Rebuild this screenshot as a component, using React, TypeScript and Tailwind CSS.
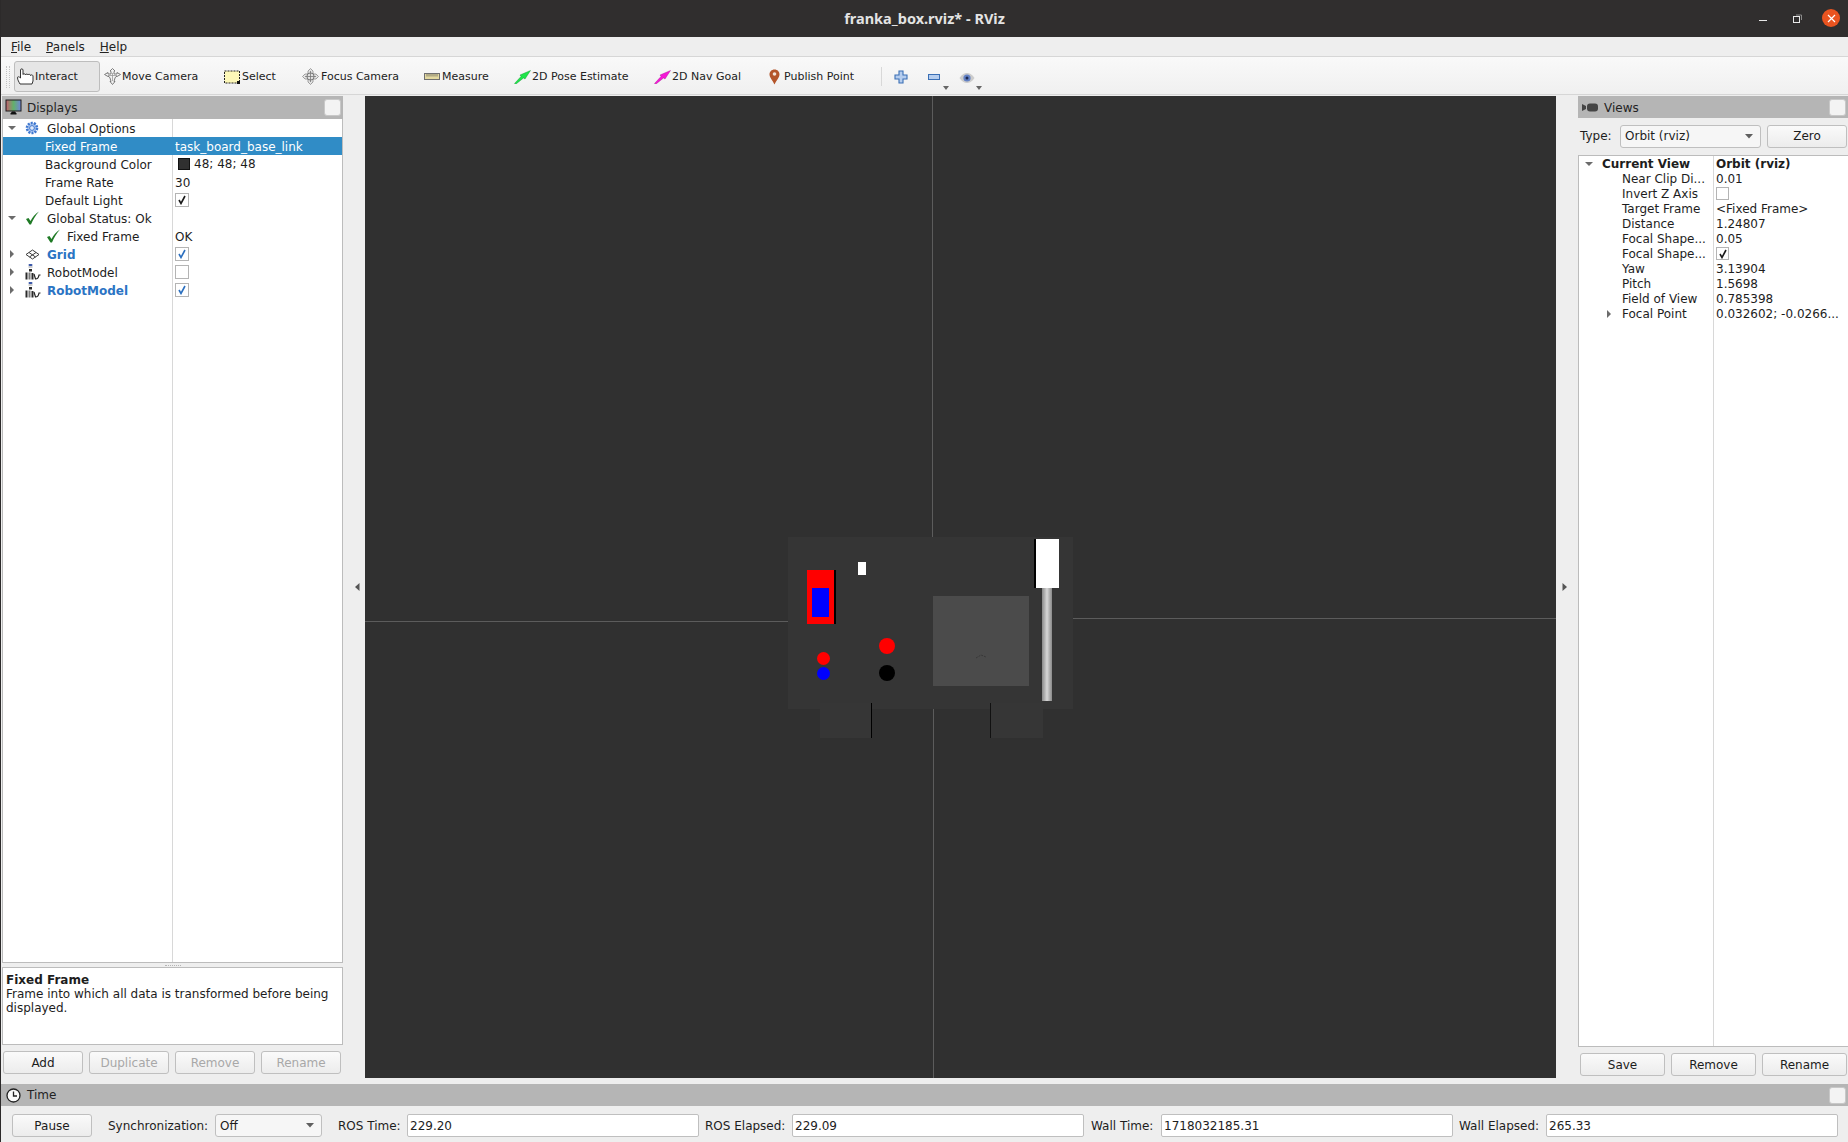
import type { ReactNode } from "react";

const UI = "font-['DejaVu_Sans',sans-serif]";

function Arrow({ open }: { open?: boolean }) {
  return (
    <svg width="10" height="10" viewBox="0 0 10 10" className="shrink-0">
      {open ? <path d="M1 3 L9 3 L5 7 Z" fill="#6b6b6b" /> : <path d="M3 1 L7 5 L3 9 Z" fill="#6b6b6b" />}
    </svg>
  );
}

function Check({ on, blue, size = 14 }: { on?: boolean; blue?: boolean; size?: number }) {
  return (
    <span className="flex shrink-0 items-center justify-center border border-[#b4b4b4] bg-white" style={{ width: size, height: size }}>
      {on && (
        <svg width="10" height="10" viewBox="0 0 10 10">
          <path d="M2 5 L4 8.5 L8 1" fill="none" stroke={blue ? "#2b6fbf" : "#1a1a1a"} strokeWidth="1.6" />
        </svg>
      )}
    </span>
  );
}

function GreenTick() {
  return (
    <svg width="15" height="14" viewBox="0 0 15 14" className="shrink-0">
      <path d="M1 8 L3.5 7 L5.5 10 C7.5 6 10 3 14 0.5 C10.5 4.5 8 8.5 6 13.5 L4.5 13.5 Z" fill="#1f7a25" />
    </svg>
  );
}

function Gear() {
  return (
    <svg width="14" height="14" viewBox="0 0 14 14" className="shrink-0">
      <circle cx="7" cy="7" r="5" fill="#b4cbf0" stroke="#3f78d0" strokeWidth="2.6" strokeDasharray="2 1.1" />
      <circle cx="7" cy="7" r="2.4" fill="#dfe8f8" stroke="#3f78d0" />
    </svg>
  );
}

function GridIcon() {
  return (
    <svg width="15" height="11" viewBox="0 0 15 11" className="shrink-0">
      <path d="M7.5 1 L14 5.5 L7.5 10 L1 5.5 Z M4 3.5 L10.5 8 M11 3.5 L4.5 8" fill="none" stroke="#3c3c3c" />
    </svg>
  );
}

function RobotIcon() {
  return (
    <svg width="16" height="16" viewBox="0 0 16 16" className="shrink-0">
      <rect x="3.5" y="0" width="4" height="2" rx="1" fill="#3a57a8" />
      <rect x="3.5" y="2.5" width="4" height="1" fill="#9a9a9a" />
      <rect x="4" y="5" width="3" height="2.5" fill="#2a2a2a" />
      <rect x="0.5" y="8.5" width="2" height="7" fill="#2a2a2a" />
      <rect x="3.5" y="8.5" width="2" height="7" fill="#777" />
      <rect x="6.5" y="9" width="2" height="6.5" fill="#2a2a2a" />
      <path d="M9 10 L10.5 15 C12.5 15 13.5 14 14 11 L15.5 11" fill="none" stroke="#222" strokeWidth="1.2" />
    </svg>
  );
}

function Row({ icon, arrow, indent, label, bold, selected, children }: { icon?: ReactNode; arrow?: "open" | "closed"; indent?: boolean; label: string; bold?: boolean; selected?: boolean; children?: ReactNode }) {
  return (
    <div className={`flex h-[18px] items-center ${selected ? "bg-[#308cc6] text-white" : ""}`}>
      <div className={`flex h-full w-[170px] shrink-0 items-center border-r ${selected ? "border-[#308cc6]" : "border-[#d8d8d8]"}`}>
        <div className="flex w-[22px] shrink-0 justify-start pl-[4px]">{arrow && <Arrow open={arrow === "open"} />}</div>
        {indent && <span className="w-[20px] shrink-0" />}
        {icon ? <div className="flex w-[22px] shrink-0 items-center justify-start">{icon}</div> : null}
        <span className={`pt-[1px] ${bold ? "font-bold text-[#2b74c4]" : ""}`}>{label}</span>
      </div>
      <div className="flex h-full min-w-0 flex-1 items-center pl-[2px]">{children}</div>
    </div>
  );
}

function SmallRow({ arrow, label, bold, value }: { arrow?: "open" | "closed"; label: string; bold?: boolean; value: ReactNode }) {
  return (
    <div className={`flex h-[15px] items-center ${bold ? "font-bold" : ""}`}>
      <div className="flex h-full w-[135px] shrink-0 items-center border-r border-[#d8d8d8]">
        {arrow === "open" && <span className="ml-[5px] flex w-[38px]"><Arrow open /></span>}
        {arrow === "closed" && <span className="ml-[25px] flex w-[18px]"><Arrow /></span>}
        {!arrow && <span className="w-[43px]" />}
        <span className={`whitespace-nowrap ${bold ? "-ml-[20px]" : ""}`}>{label}</span>
      </div>
      <div className="flex h-full min-w-0 flex-1 items-center whitespace-nowrap pl-[2px]">{value}</div>
    </div>
  );
}

function QButton({ children, disabled, className }: { children: ReactNode; disabled?: boolean; className: string }) {
  return (
    <button className={`flex items-center justify-center rounded-[3px] border border-[#bfbfbf] bg-gradient-to-b from-[#fafafa] to-[#ececec] text-[12px] ${disabled ? "text-[#a8a8a8]" : "text-[#1c1c1c]"} ${className}`}>
      {children}
    </button>
  );
}

function DockHeader({ icon, title, className }: { icon: ReactNode; title: string; className: string }) {
  return (
    <div className={`flex shrink-0 items-center bg-[#b5b5b5] pr-[2px] text-[12px] text-[#232323] ${className}`}>
      {icon}
      <span className="flex-1">{title}</span>
      <span className="h-[17px] w-[17px] rounded-[3px] border border-[#c8c8c8] bg-[#f3f3f3]" />
    </div>
  );
}

function Combo({ text, className }: { text: string; className: string }) {
  return (
    <div className={`flex items-center justify-between rounded-[3px] border border-[#bfbfbf] bg-[#f6f6f6] pl-[4px] pr-[7px] text-[12px] ${className}`}>
      <span>{text}</span>
      <svg width="8" height="5" viewBox="0 0 8 5"><path d="M0 0 H8 L4 4.5 Z" fill="#5f5f5f" /></svg>
    </div>
  );
}

function TimeField({ label, value, labelClass, className }: { label: string; value: string; labelClass: string; className: string }) {
  return (
    <>
      <span className={`shrink-0 whitespace-nowrap ${labelClass}`}>{label}</span>
      <div className={`flex h-[23px] w-[292px] shrink-0 items-center rounded-[2px] border border-[#bfbfbf] bg-white pl-[2px] ${className}`}>{value}</div>
    </>
  );
}

const tools: { label: string; w: string; box: string; icon: ReactNode }[] = [
  {
    label: "Move Camera",
    w: "w-[120px]",
    box: "w-[18px]",
    icon: (
      <svg width="17" height="17" viewBox="0 0 17 17">
        <path d="M8.5 0.5 L11 3 L10 3.5 V6 L13 6 L13 4.5 L16.5 6.5 L13 8.5 L12 8.5 L11 10 L10 13.5 L11 13.5 L8.5 16.5 L6 13.5 L7 13.5 L6 10 L5 8.5 L4 8.5 L0.5 6.5 L4 4.5 L4 6 L7 6 V3.5 L6 3 Z" fill="#f2f2f2" stroke="#6f6f6f" strokeWidth="0.9" />
        <path d="M4 7.5 H13 M8.5 5 V13" stroke="#999" strokeWidth="0.8" />
      </svg>
    ),
  },
  {
    label: "Select",
    w: "w-[78px]",
    box: "w-[18px]",
    icon: (
      <svg width="16" height="14" viewBox="0 0 16 14">
        <rect x="0.5" y="1" width="15" height="12" fill="#fdf8b8" stroke="#222" strokeDasharray="2 1" />
        <rect x="13" y="11" width="3" height="3" fill="#111" />
      </svg>
    ),
  },
  {
    label: "Focus Camera",
    w: "w-[122px]",
    box: "w-[19px]",
    icon: (
      <svg width="17" height="17" viewBox="0 0 17 17">
        <path d="M8.5 0.5 L11 3 V6 H14 L16.5 8.5 L14 11 H11 V14 L8.5 16.5 L6 14 V11 H3 L0.5 8.5 L3 6 H6 V3 Z" fill="#e2e2e2" stroke="#8a8a8a" strokeWidth="0.8" />
        <circle cx="8.5" cy="8.5" r="3.6" fill="none" stroke="#777" />
        <path d="M8.5 3 V14 M3 8.5 H14" stroke="#777" strokeWidth="0.8" />
      </svg>
    ),
  },
  {
    label: "Measure",
    w: "w-[90px]",
    box: "w-[18px]",
    icon: (
      <svg width="16" height="8" viewBox="0 0 16 8">
        <rect x="0.5" y="0.5" width="15" height="6" fill="#e3d9a0" stroke="#6f6f6f" />
        <path d="M3 1 V3.5 M5 1 V3.5 M7 1 V3.5 M9 1 V3.5 M11 1 V3.5 M13 1 V3.5" stroke="#555" strokeWidth="0.7" />
      </svg>
    ),
  },
  {
    label: "2D Pose Estimate",
    w: "w-[140px]",
    box: "w-[18px]",
    icon: (
      <svg width="17" height="14" viewBox="0 0 17 14">
        <path d="M0.5 13.5 L7 6.5 L6 5 L16.5 0.5 L11 9 L9.5 8 L2 14 Z" fill="#1ee64a" stroke="#0c8a28" strokeWidth="0.4" />
      </svg>
    ),
  },
  {
    label: "2D Nav Goal",
    w: "w-[115px]",
    box: "w-[18px]",
    icon: (
      <svg width="17" height="14" viewBox="0 0 17 14">
        <path d="M0.5 13.5 L7 6.5 L6 5 L16.5 0.5 L11 9 L9.5 8 L2 14 Z" fill="#f517d6" stroke="#a5108f" strokeWidth="0.4" />
      </svg>
    ),
  },
  {
    label: "Publish Point",
    w: "w-[112px]",
    box: "w-[15px]",
    icon: (
      <svg width="11" height="16" viewBox="0 0 11 16">
        <path d="M5.5 0.5 C8.5 0.5 10.5 2.7 10.5 5.5 C10.5 8.5 7.5 11 5.5 15.5 C3.5 11 0.5 8.5 0.5 5.5 C0.5 2.7 2.5 0.5 5.5 0.5 Z" fill="#b4552a" />
        <circle cx="5.5" cy="5" r="1.8" fill="#f2e3d8" />
      </svg>
    ),
  },
];

function TitleBar() {
  return (
    <div className="relative flex h-[37px] shrink-0 items-center justify-center bg-[#302e2e] font-['Noto_Sans',sans-serif] text-[14.5px] font-bold text-[#e3e3e3]">
      franka_box.rviz* - RViz
      <div className="absolute right-[8px] top-[9px] flex items-center">
        <span className="mr-[26px] mt-[4px] h-[1px] w-[8px] bg-[#e8e8e8]" />
        <svg width="9" height="9" viewBox="0 0 9 9" className="mr-[20px]">
          <rect x="0.5" y="2.5" width="6" height="6" fill="none" stroke="#e8e8e8" />
          <path d="M3 1 H8.5 V6" fill="none" stroke="#8a8a8a" />
        </svg>
        <span className="flex h-[18px] w-[18px] items-center justify-center rounded-full bg-[#e95420]">
          <svg width="9" height="9" viewBox="0 0 9 9"><path d="M1 1 L8 8 M8 1 L1 8" stroke="#fff" strokeWidth="1.2" /></svg>
        </span>
      </div>
    </div>
  );
}

function Toolbar() {
  return (
    <div className="flex h-[39px] shrink-0 items-center border-y border-[#d6d6d6] bg-gradient-to-b from-[#f9f9f9] to-[#f0f0f0] pt-[2px] text-[11px] text-[#222]">
      <span className="ml-[5px] mr-[4px] h-[22px] w-[4px] border-x border-dotted border-[#c4c4c4]" />
      <div className="mr-[4px] flex h-[31px] w-[86px] items-center rounded-[3px] border border-[#bdbdbd] bg-[#e6e6e6] pl-[2px]">
        <svg width="17" height="17" viewBox="0 0 17 17">
          <path d="M3 16 C2 14 0.5 12 0.5 9.5 C0.5 8.5 2 8.5 3.5 10 V2 C3.5 0.5 6 0.5 6 2 V6.5 C6 5.5 8.5 5.5 8.5 7 C8.5 5.8 11 5.8 11 7 C11 6 13.5 6 13.5 7.5 C13.5 6.5 16 6.8 16 8 V13 L15 16 Z" fill="#fff" stroke="#1e1e1e" strokeWidth="0.9" />
        </svg>
        <span className="ml-[1px] pt-[2px]">Interact</span>
      </div>
      {tools.map((t) => (
        <div key={t.label} className={`flex shrink-0 items-center whitespace-nowrap ${t.w}`}>
          <span className={`flex shrink-0 items-center ${t.box}`}>{t.icon}</span>
          <span className="pt-[2px]">{t.label}</span>
        </div>
      ))}
      <span className="h-[19px] w-[1px] bg-[#d8d8d8]" />
      <svg width="14" height="14" viewBox="0 0 14 14" className="ml-[12px]">
        <path d="M5 1 H9 V5 H13 V9 H9 V13 H5 V9 H1 V5 H5 Z" fill="#b5cdee" stroke="#3a6fb5" strokeWidth="1.1" />
      </svg>
      <div className="relative ml-[20px] h-[20px] w-[13px]">
        <span className="absolute left-0 top-[7px] h-[6px] w-[12px] border border-[#3a6fb5] bg-[#b5cdee]" />
        <svg width="6" height="4" viewBox="0 0 6 4" className="absolute left-[15px] top-[19px]"><path d="M0 0 H6 L3 4 Z" fill="#666" /></svg>
      </div>
      <div className="relative ml-[18px] h-[20px] w-[16px]">
        <svg width="16" height="12" viewBox="0 0 16 12" className="absolute left-0 top-[5px]">
          <path d="M0.5 6 C3 2 6 1 8 1 C10 1 13 2 15.5 6 C13 10 10 11 8 11 C6 11 3 10 0.5 6 Z" fill="#cccccc" />
          <circle cx="8" cy="6" r="3.6" fill="#6180c4" />
          <circle cx="8" cy="6" r="1.5" fill="#1a2650" />
        </svg>
        <svg width="6" height="4" viewBox="0 0 6 4" className="absolute left-[17px] top-[19px]"><path d="M0 0 H6 L3 4 Z" fill="#666" /></svg>
      </div>
    </div>
  );
}

function DisplaysPanel() {
  return (
    <div className="flex h-full w-[341px] shrink-0 flex-col text-[12px] text-[#1d1d1d]">
      <DockHeader
        className="h-[23px] pl-[3px]"
        title="Displays"
        icon={
          <svg width="17" height="17" viewBox="0 0 17 17" className="mr-[5px]">
            <defs>
              <linearGradient id="screen" x1="0" x2="1" y1="0" y2="0">
                <stop offset="0%" stopColor="#c4606e" />
                <stop offset="50%" stopColor="#63b06b" />
                <stop offset="100%" stopColor="#7184d8" />
              </linearGradient>
            </defs>
            <rect x="1" y="1" width="15" height="11" fill="url(#screen)" stroke="#1d1d1d" />
            <path d="M5.5 15.5 H11.5 V14.5 L10 12.5 H7 L5.5 14.5 Z" fill="#111" />
          </svg>
        }
      />
      <div className="flex min-h-0 flex-1 flex-col border-x border-b border-[#bcbcbc] bg-white">
        <Row arrow="open" icon={<Gear />} label="Global Options" />
        <Row indent label="Fixed Frame" selected><span className="pt-[1px]">task_board_base_link</span></Row>
        <Row indent label="Background Color">
          <span className="ml-[3px] mr-[4px] h-[12px] w-[12px] border border-[#111] bg-[#303030]" />48; 48; 48
        </Row>
        <Row indent label="Frame Rate"><span className="pt-[1px]">30</span></Row>
        <Row indent label="Default Light"><Check on /></Row>
        <Row arrow="open" icon={<GreenTick />} label="Global Status: Ok" />
        <div className="flex h-[18px] items-center">
          <div className="flex h-full w-[170px] shrink-0 items-center border-r border-[#d8d8d8] pl-[43px]">
            <GreenTick />
            <span className="ml-[6px] pt-[1px]">Fixed Frame</span>
          </div>
          <div className="pl-[2px] pt-[1px]">OK</div>
        </div>
        <Row arrow="closed" icon={<GridIcon />} label="Grid" bold><Check on blue /></Row>
        <Row arrow="closed" icon={<RobotIcon />} label="RobotModel"><Check /></Row>
        <Row arrow="closed" icon={<RobotIcon />} label="RobotModel" bold><Check on blue /></Row>
        <div className="ml-[169px] flex-1 border-l border-[#d8d8d8]" />
      </div>
      <div className="flex h-[4px] shrink-0 items-center justify-center">
        <span className="h-[1px] w-[16px] border-t border-dotted border-[#b5b5b5]" />
      </div>
      <div className="h-[78px] shrink-0 border border-[#bcbcbc] bg-white pl-[3px] pr-[5px] pt-[5px] leading-[14px]">
        <div className="font-bold">Fixed Frame</div>
        Frame into which all data is transformed before being displayed.
      </div>
      <div className="flex h-[39px] shrink-0 items-start gap-[6px] pl-[1px] pt-[6px]">
        <QButton className="h-[23px] w-[80px]">Add</QButton>
        <QButton disabled className="h-[23px] w-[80px]">Duplicate</QButton>
        <QButton disabled className="h-[23px] w-[80px]">Remove</QButton>
        <QButton disabled className="h-[23px] w-[80px]">Rename</QButton>
      </div>
    </div>
  );
}

function Viewport() {
  return (
    <div className="relative h-[982px] w-[1191px] shrink-0 overflow-hidden bg-[#303030]">
      {/* grid lines */}
      <div className="absolute left-0 top-[525px] h-[1px] w-[424px] bg-[#5c5c5c]" />
      <div className="absolute left-[707px] top-[522px] h-[1px] w-[484px] bg-[#5c5c5c]" />
      <div className="absolute left-[567px] top-0 h-[442px] w-[1px] bg-[#5c5c5c]" />
      <div className="absolute left-[568px] top-[612px] h-[370px] w-[1px] bg-[#5c5c5c]" />
      {/* board */}
      <div className="absolute left-[423px] top-[441px] h-[172px] w-[285px] bg-[#353535]" />
      <div className="absolute left-[455px] top-[607px] h-[35px] w-[52px] bg-[#363636]" />
      <div className="absolute left-[506px] top-[607px] h-[35px] w-[1px] bg-black" />
      <div className="absolute left-[625px] top-[607px] h-[35px] w-[53px] bg-[#363636]" />
      <div className="absolute left-[625px] top-[607px] h-[35px] w-[1px] bg-[#111]" />
      {/* parts */}
      <div className="absolute left-[442px] top-[474px] h-[54px] w-[27px] bg-[#ff0000]" />
      <div className="absolute left-[469px] top-[474px] h-[54px] w-[2px] bg-black" />
      <div className="absolute left-[447px] top-[492px] h-[29px] w-[17px] bg-[#0000ff]" />
      <div className="absolute left-[493px] top-[466px] h-[13px] w-[8px] bg-white" />
      <div className="absolute left-[568px] top-[500px] h-[90px] w-[96px] bg-[#4b4b4b]" />
      <svg width="12" height="5" viewBox="0 0 12 5" className="absolute left-[610px] top-[558px]">
        <path d="M1 4 L6 1 L11 3" fill="none" stroke="#383838" strokeDasharray="2 1" />
      </svg>
      <div className="absolute left-[669px] top-[443px] h-[49px] w-[2px] bg-black" />
      <div className="absolute left-[671px] top-[443px] h-[49px] w-[23px] bg-white" />
      <div className="absolute left-[677px] top-[492px] h-[113px] w-[10px] bg-gradient-to-r from-[#8a8a8a] via-[#d8d8d8] to-[#8a8a8a]" />
      <div className="absolute left-[452px] top-[556px] h-[13px] w-[13px] rounded-full bg-[#ff0000]" />
      <div className="absolute left-[452px] top-[571px] h-[13px] w-[13px] rounded-full bg-[#0000ff]" />
      <div className="absolute left-[514px] top-[542px] h-[16px] w-[16px] rounded-full bg-[#ff0000]" />
      <div className="absolute left-[514px] top-[569px] h-[16px] w-[16px] rounded-full bg-black" />
    </div>
  );
}

function LeftHandle() {
  return (
    <div className="flex h-full w-[22px] shrink-0 items-center pb-[7px] pl-[12px]">
      <svg width="5" height="8" viewBox="0 0 5 8"><path d="M4.5 0 V8 L0 4 Z" fill="#555" /></svg>
    </div>
  );
}

function RightHandle() {
  return (
    <div className="flex h-full w-[22px] shrink-0 items-center pb-[7px] pl-[6px]">
      <svg width="5" height="8" viewBox="0 0 5 8"><path d="M0.5 0 V8 L5 4 Z" fill="#555" /></svg>
    </div>
  );
}

function ViewsPanel() {
  const rows: [string, ReactNode][] = [
    ["Near Clip Di...", "0.01"],
    ["Invert Z Axis", <Check size={13} />],
    ["Target Frame", "<Fixed Frame>"],
    ["Distance", "1.24807"],
    ["Focal Shape...", "0.05"],
    ["Focal Shape...", <Check on size={13} />],
    ["Yaw", "3.13904"],
    ["Pitch", "1.5698"],
    ["Field of View", "0.785398"],
  ];
  return (
    <div className="flex h-full w-[270px] shrink-0 flex-col text-[12px] text-[#1d1d1d]">
      <DockHeader
        className="h-[22px] pl-[4px] pt-[1px]"
        title="Views"
        icon={
          <svg width="16" height="9" viewBox="0 0 16 9" className="mr-[6px]">
            <path d="M0 1 L4 3 V6 L0 8 Z" fill="#444" />
            <rect x="5" y="0.5" width="11" height="8" rx="3" fill="#444" />
          </svg>
        }
      />
      <div className="flex h-[37px] shrink-0 items-center pb-[1px]">
        <span className="ml-[2px] w-[40px] shrink-0">Type:</span>
        <Combo text="Orbit (rviz)" className="h-[23px] w-[141px] shrink-0" />
        <QButton className="ml-[6px] h-[23px] w-[80px] shrink-0">Zero</QButton>
      </div>
      <div className="flex min-h-0 flex-1 flex-col border border-r-0 border-[#bcbcbc] bg-white">
        <SmallRow arrow="open" bold label="Current View" value="Orbit (rviz)" />
        {rows.map(([k, v], i) => (
          <SmallRow key={i} label={k} value={v} />
        ))}
        <SmallRow arrow="closed" label="Focal Point" value="0.032602; -0.0266..." />
        <div className="ml-[134px] flex-1 border-l border-[#d8d8d8]" />
      </div>
      <div className="flex h-[37px] shrink-0 items-start gap-[6px] pl-[2px] pt-[6px]">
        <QButton className="h-[23px] w-[85px] shrink-0">Save</QButton>
        <QButton className="h-[23px] w-[85px] shrink-0">Remove</QButton>
        <QButton className="h-[23px] w-[85px] shrink-0">Rename</QButton>
      </div>
    </div>
  );
}

function TimePanel() {
  return (
    <div className="flex h-[58px] shrink-0 flex-col text-[12px] text-[#1d1d1d]">
      <DockHeader
        className="h-[22px] pl-[5px]"
        title="Time"
        icon={
          <svg width="15" height="15" viewBox="0 0 15 15" className="mr-[6px]">
            <circle cx="7.5" cy="7.5" r="6.5" fill="#fafafa" stroke="#222" strokeWidth="1.3" />
            <path d="M7.5 3.5 V8 H11" fill="none" stroke="#222" strokeWidth="1.3" />
          </svg>
        }
      />
      <div className="flex h-[36px] items-center pl-[11px] pt-[3px]">
        <QButton className="mr-[16px] h-[23px] w-[80px] shrink-0">Pause</QButton>
        <span className="w-[107px] shrink-0">Synchronization:</span>
        <Combo text="Off" className="mr-[16px] h-[23px] w-[107px] shrink-0" />
        <TimeField label="ROS Time:" value="229.20" labelClass="w-[69px]" className="mr-[6px]" />
        <TimeField label="ROS Elapsed:" value="229.09" labelClass="w-[87px]" className="mr-[7px]" />
        <TimeField label="Wall Time:" value="1718032185.31" labelClass="w-[70px]" className="mr-[6px]" />
        <TimeField label="Wall Elapsed:" value="265.33" labelClass="w-[87px]" className="" />
      </div>
    </div>
  );
}

export default function App() {
  return (
    <div className={`flex h-[1142px] w-[1848px] flex-col overflow-hidden border-l border-[#2c2a2a] bg-[#eeeeee] ${UI}`}>
      <TitleBar />
      <div className="flex h-[19px] shrink-0 items-center gap-[15px] pl-[10px] text-[12px] text-[#222]">
        <span><u>F</u>ile</span>
        <span><u>P</u>anels</span>
        <span><u>H</u>elp</span>
      </div>
      <Toolbar />
      <div className="mt-[1px] flex h-[988px] shrink-0 pl-[1px]">
        <DisplaysPanel />
        <LeftHandle />
        <Viewport />
        <RightHandle />
        <ViewsPanel />
      </div>
      <TimePanel />
    </div>
  );
}
